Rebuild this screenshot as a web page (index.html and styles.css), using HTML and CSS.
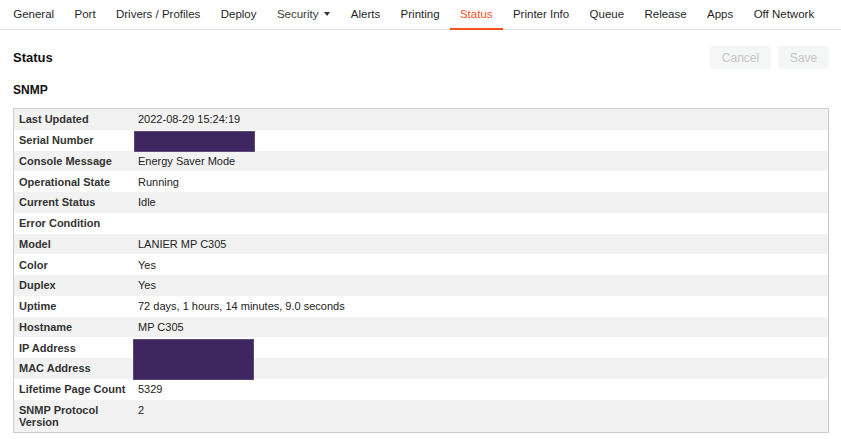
FILE: index.html
```html
<!DOCTYPE html>
<html lang="en">
<head>
  <meta charset="UTF-8" />
  <title>Printer Status</title>
  <link rel="stylesheet" href="styles.css">
</head>
<body>

<nav class="tabs">
  <a class="tab">General</a>
  <a class="tab">Port</a>
  <a class="tab">Drivers / Profiles</a>
  <a class="tab">Deploy</a>
  <a class="tab dropdown">Security <span class="caret"></span></a>
  <a class="tab">Alerts</a>
  <a class="tab">Printing</a>
  <a class="tab active">Status</a>
  <a class="tab">Printer Info</a>
  <a class="tab">Queue</a>
  <a class="tab">Release</a>
  <a class="tab">Apps</a>
  <a class="tab">Off Network</a>
</nav>

<main class="page">
  <div class="page-head">
    <h2>Status</h2>
    <div class="actions">
      <button class="btn" disabled>Cancel</button>
      <button class="btn" disabled>Save</button>
    </div>
  </div>

  <h3>SNMP</h3>

  <div class="info-wrap">
    <table class="info">
      <tr><th>Last Updated</th><td>2022-08-29 15:24:19</td></tr>
      <tr><th>Serial Number</th><td><span class="redact redact-one"></span></td></tr>
      <tr><th>Console Message</th><td>Energy Saver Mode</td></tr>
      <tr><th>Operational State</th><td>Running</td></tr>
      <tr><th>Current Status</th><td>Idle</td></tr>
      <tr><th>Error Condition</th><td></td></tr>
      <tr><th>Model</th><td>LANIER MP C305</td></tr>
      <tr><th>Color</th><td>Yes</td></tr>
      <tr><th>Duplex</th><td>Yes</td></tr>
      <tr><th>Uptime</th><td>72 days, 1 hours, 14 minutes, 9.0 seconds</td></tr>
      <tr><th>Hostname</th><td>MP C305</td></tr>
      <tr><th>IP Address</th><td><span class="redact redact-two"></span></td></tr>
      <tr><th>MAC Address</th><td></td></tr>
      <tr><th>Lifetime Page Count</th><td>5329</td></tr>
      <tr><th>SNMP Protocol Version</th><td>2</td></tr>
    </table>
  </div>
</main>

</body>
</html>
```

FILE: styles.css
```css
html, body {
  margin: 0; padding: 0;
  font-family: "Liberation Sans", Arial, sans-serif;
  background: #fff; color: #222;
}

.tabs {
  display: flex;
  height: 29px;
  padding-left: 3px;
  border-bottom: 1px solid #dcdcdc;
}
.tab {
  display: flex; align-items: center; flex-shrink: 0;
  white-space: nowrap;
  padding: 0 10.2px 1px;
  font-size: 11.5px; color: #1f1f1f;
  border-bottom: 2px solid transparent;
  margin-bottom: -1px;
  cursor: pointer;
}
.tab.dropdown { color: #3a3a3a; }
.tab.active { color: #f4511e; border-bottom-color: #f4511e; }
.caret {
  display: inline-block; margin-left: 6px;
  border-left: 3.5px solid transparent;
  border-right: 3.5px solid transparent;
  border-top: 4px solid #333;
}

.page { padding: 0 12px 0 13px; }

.page-head {
  display: flex; justify-content: space-between; align-items: center;
  margin-top: 16px;
}
.page-head h2 { margin: 0; font-size: 13px; font-weight: bold; color: #111; }
.actions { display: flex; gap: 7px; }
.btn {
  height: 23px; padding: 0 11px;
  font-family: inherit; font-size: 12px;
  background: #f5f6f6; color: #c6c6c6;
  border: none; border-radius: 3px;
}
.btn:first-child { width: 61px; }
.btn:last-child { width: 51px; }

h3 { margin: 14px 0 11px; font-size: 12px; font-weight: bold; color: #111; }

.info-wrap { border: 1px solid #cccccc; }
.info {
  width: 100%; border-collapse: collapse;
  font-size: 11px; line-height: 12px;
}
.info tr:nth-child(odd) { background: #f2f2f2; }
.info th, .info td { padding: 4.375px 5px; vertical-align: top; text-align: left; }
.info th { width: 109px; font-weight: bold; color: #333; }
.info td { color: #222; position: relative; }

.redact {
  position: absolute;
  background: #3e2661; border: 1px solid #5a4a76;
  box-sizing: border-box;
}
.redact-one { left: 1px; top: 1px; width: 121px; height: 21px; }
.redact-two { left: 0; top: 2px; width: 121px; height: 41px; }
```
